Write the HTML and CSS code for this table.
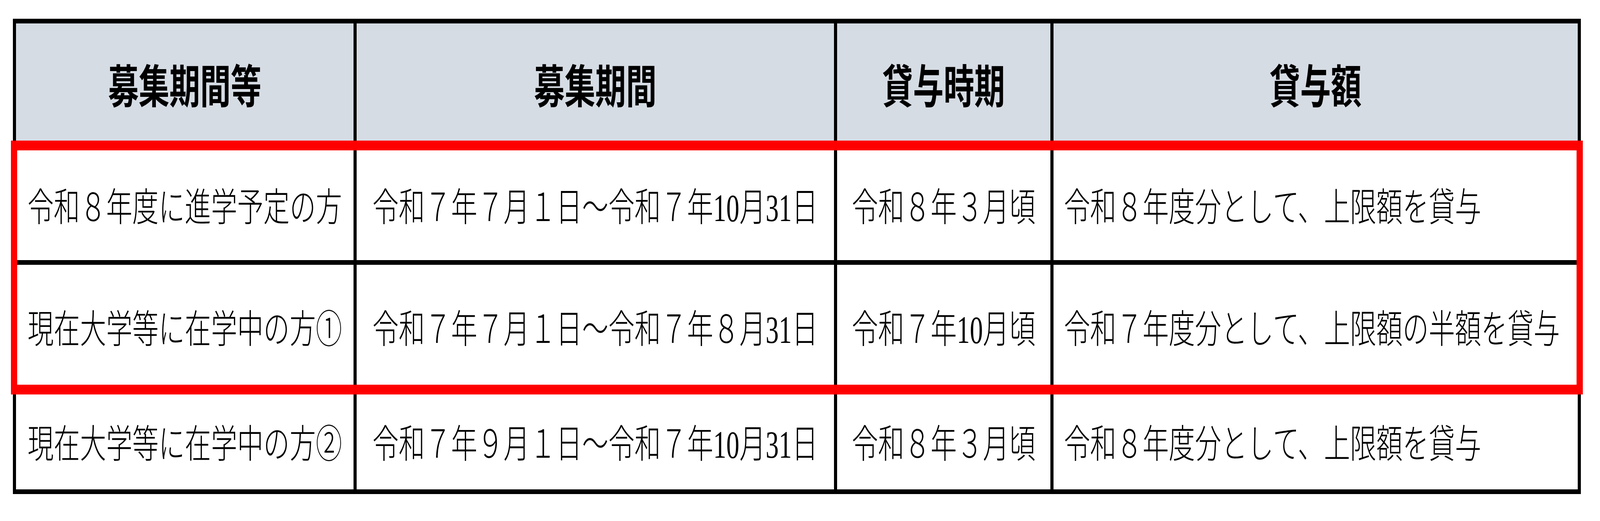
FILE: index.html
```html
<!DOCTYPE html>
<html lang="ja">
<head>
<meta charset="utf-8">
<title>募集期間等</title>
<link rel="stylesheet" href="styles.css">
</head>
<body>
<div class="page">
  <div class="table" role="table">
    <div class="cell head k1"><span class="t">募集期間等</span></div>
    <div class="cell head k2"><span class="t">募集期間</span></div>
    <div class="cell head k3"><span class="t">貸与時期</span></div>
    <div class="cell head k4"><span class="t">貸与額</span></div>

    <div class="cell r1 k1"><span class="t">令和８年度に進学予定の方</span></div>
    <div class="cell r1 k2"><span class="t">令和７年７月１日～令和７年10月31日</span></div>
    <div class="cell r1 k3"><span class="t">令和８年３月頃</span></div>
    <div class="cell r1 k4 l"><span class="t">令和８年度分として、上限額を貸与</span></div>

    <div class="cell r2 k1"><span class="t">現在大学等に在学中の方①</span></div>
    <div class="cell r2 k2"><span class="t">令和７年７月１日～令和７年８月31日</span></div>
    <div class="cell r2 k3"><span class="t">令和７年10月頃</span></div>
    <div class="cell r2 k4 l"><span class="t">令和７年度分として、上限額の半額を貸与</span></div>

    <div class="cell r3 k1"><span class="t">現在大学等に在学中の方②</span></div>
    <div class="cell r3 k2"><span class="t">令和７年９月１日～令和７年10月31日</span></div>
    <div class="cell r3 k3"><span class="t">令和８年３月頃</span></div>
    <div class="cell r3 k4 l"><span class="t">令和８年度分として、上限額を貸与</span></div>

    <div class="highlight" aria-hidden="true"></div>
  </div>
</div>
</body>
</html>
```

FILE: styles.css
```css
/* Horizontal sizes are in vw (the design canvas is 6104px wide, 1 design px = 0.0163827vw);
   vertical sizes are in px (the canvas is 1334px tall). */
html, body {
  margin: 0;
  padding: 0;
  background: #ffffff;
  overflow: hidden;
}

.page {
  padding: 48px 0 0 0.80275vw;
}

.table {
  display: grid;
  width: max-content;
  grid-template-columns: 21.1009vw 29.8165vw 13.3355vw 32.7654vw;
  grid-template-rows: 306px 288px 313px 250px;
  column-gap: 0.19659vw;
  row-gap: 12px;
  padding: 12px 0.19659vw;
  background: #000000;
}

.cell {
  display: flex;
  align-items: center;
  justify-content: center;
  background: #ffffff;
  color: #000000;
  font-family: "Liberation Serif", "Noto Sans CJK JP", serif;
  font-size: 1.63827vw;
  font-weight: 300;
  white-space: nowrap;
  overflow: hidden;
}

.t {
  display: inline-block;
  transform-origin: 50% 50%;
}

@media (max-width: 6000px) {
  .t {
    transform: scaleY(1.490234);
  }
}

.head { grid-row: 1; }
.r1 { grid-row: 2; }
.r2 { grid-row: 3; }
.r3 { grid-row: 4; }
.k1 { grid-column: 1; }
.k2 { grid-column: 2; }
.k3 { grid-column: 3; }
.k4 { grid-column: 4; }

.head {
  background: #d6dce4;
  font-family: "Noto Sans CJK JP", sans-serif;
  font-size: 1.91678vw;
  font-weight: 700;
}

.l {
  justify-content: flex-start;
  padding-left: 0.6553vw;
}

.highlight {
  grid-row: 2 / 4;
  grid-column: 1 / -1;
  margin: -18px -0.31127vw -19px -0.31127vw;
  border-style: solid;
  border-color: #ff0000;
  border-width: 25px 0.40957vw;
  pointer-events: none;
  z-index: 2;
}
```
